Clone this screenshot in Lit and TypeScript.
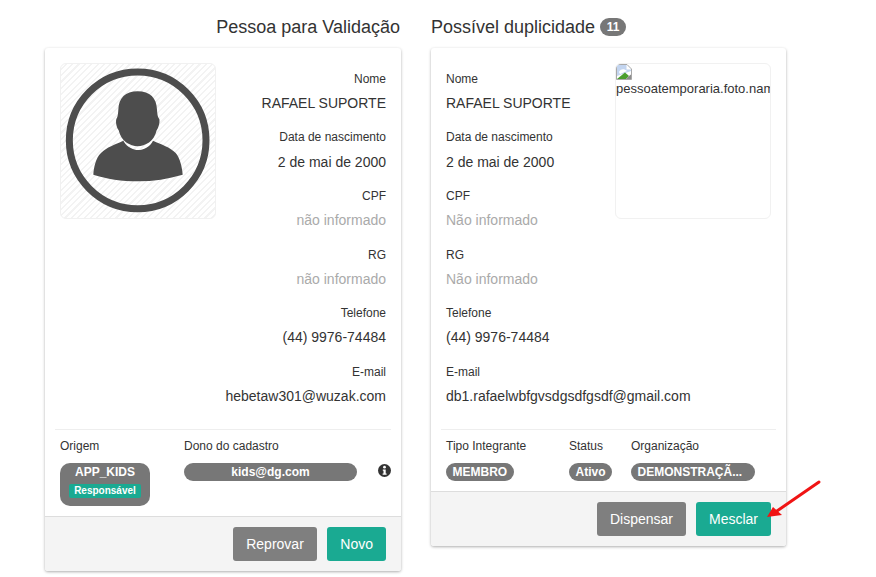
import { LitElement, html, css, nothing } from 'lit';
import { customElement } from 'lit/decorators.js';

interface Field {
    label: string;
    value: string;
    muted?: boolean;
}

const leftFields: Field[] = [
    { label: 'Nome', value: 'RAFAEL SUPORTE' },
    { label: 'Data de nascimento', value: '2 de mai de 2000' },
    { label: 'CPF', value: 'não informado', muted: true },
    { label: 'RG', value: 'não informado', muted: true },
    { label: 'Telefone', value: '(44) 9976-74484' },
    { label: 'E-mail', value: 'hebetaw301@wuzak.com' },
];

const rightFields: Field[] = [
    { label: 'Nome', value: 'RAFAEL SUPORTE' },
    { label: 'Data de nascimento', value: '2 de mai de 2000' },
    { label: 'CPF', value: 'Não informado', muted: true },
    { label: 'RG', value: 'Não informado', muted: true },
    { label: 'Telefone', value: '(44) 9976-74484' },
    { label: 'E-mail', value: 'db1.rafaelwbfgvsdgsdfgsdf@gmail.com' },
];

@customElement('app-root')
export class AppRoot extends LitElement {
    static styles = css`
        :host {
            display: block;
            position: relative;
            width: 876px;
            height: 577px;
            overflow: hidden;
            background: #fff;
            color: #333;
            font-family: 'Liberation Sans', Arial, sans-serif;
        }
        .topbar {
            height: 0;
            box-shadow: 0 0 5px rgba(0, 0, 0, 0.25);
        }
        .columns {
            display: flex;
            align-items: flex-start;
            gap: 30px;
            padding-left: 45px;
        }
        .col-left {
            width: 356px;
        }
        .col-right {
            width: 355px;
        }
        h2 {
            display: flex;
            align-items: center;
            gap: 5px;
            height: 20px;
            margin: 17px 0 11px;
            font-size: 18px;
            font-weight: 400;
            line-height: 20px;
        }
        .col-left h2 {
            justify-content: flex-end;
            padding-right: 1px;
        }
        .count {
            width: 26px;
            height: 18px;
            border-radius: 9px;
            background: #777;
            color: #fff;
            font-size: 12px;
            font-weight: 700;
            line-height: 18px;
            text-align: center;
        }
        .card {
            border-radius: 3px;
            background: #fff;
            box-shadow: 0 1px 3px rgba(0, 0, 0, 0.32);
        }
        .body {
            display: flex;
            justify-content: space-between;
            padding: 15px 15px 7.6px;
        }
        .photo {
            flex: none;
            box-sizing: border-box;
            width: 156px;
            height: 156px;
            border: 1px solid #f1f1f1;
            border-radius: 6px;
            overflow: hidden;
        }
        .photo.striped {
            background: repeating-linear-gradient(135deg, #fff 0 3px, #f3f3f3 3px 4.5px);
        }
        .photo svg {
            display: block;
        }
        .broken {
            font-size: 13px;
            line-height: 17px;
            white-space: nowrap;
        }
        .broken svg {
            width: 16px;
            height: 16px;
        }
        .fields {
            padding-top: 6.8px;
        }
        .col-left .fields {
            text-align: right;
        }
        .col-right .fields {
            flex: 1;
            min-width: 0;
            white-space: nowrap;
        }
        .field {
            margin-bottom: 14.4px;
        }
        .field label {
            display: block;
            margin-bottom: 5.2px;
            font-size: 12px;
            line-height: 18px;
        }
        .field div {
            font-size: 14px;
            line-height: 21px;
        }
        .field div.muted {
            color: #aaa;
        }
        .divider {
            margin: 0 10px;
            border-top: 1px solid #eee;
        }
        .meta {
            position: relative;
            display: grid;
            padding: 7px 15px 10px;
        }
        .col-left .meta {
            grid-template-columns: 124px 173px;
        }
        .col-right .meta {
            grid-template-columns: 123px 62px 124px;
        }
        .meta label {
            display: block;
            margin-bottom: 8px;
            font-size: 12px;
            line-height: 18px;
        }
        .pill {
            box-sizing: border-box;
            display: inline-block;
            min-height: 18px;
            padding: 0 6.5px;
            border-radius: 9px;
            background: #777;
            color: #fff;
            font-size: 12px;
            font-weight: 700;
            line-height: 18px;
            text-align: center;
            vertical-align: top;
        }
        .pill.origin {
            width: 90px;
            height: 43px;
            padding: 0 9px;
            border-radius: 10px;
        }
        .pill.owner {
            width: 173px;
        }
        .pill.org {
            width: 124px;
            white-space: nowrap;
            text-align: left;
        }
        .tag {
            display: block;
            height: 14px;
            margin-top: 3px;
            border-radius: 2px;
            background: #1aaa92;
            font-size: 10px;
            line-height: 14px;
        }
        .info {
            position: absolute;
            top: 34px;
            right: 10px;
            width: 13px;
            height: 13px;
        }
        .footer {
            display: flex;
            justify-content: flex-end;
            gap: 10px;
            padding: 10px 15px 10px;
            border-top: 1px solid #ddd;
            border-radius: 0 0 3px 3px;
            background: #f4f4f4;
        }
        button {
            height: 34px;
            padding: 0 13px;
            border: none;
            border-radius: 3px;
            color: #fff;
            font: 14px 'Liberation Sans', Arial, sans-serif;
        }
        .gray {
            background: #7f7f7f;
        }
        .wide {
            padding: 0 13.5px;
        }
        .teal {
            background: #1aaa92;
        }
        .arrow {
            position: absolute;
            left: 760px;
            top: 476px;
            width: 66px;
            height: 48px;
        }
    `;

    private renderField(f: Field) {
        return html`
            <div class="field">
                <label>${f.label}</label>
                <div class=${f.muted ? 'muted' : nothing}>${f.value}</div>
            </div>
        `;
    }

    private renderAvatar() {
        return html`
            <svg width="154" height="154" viewBox="18 13 462 462">
                <circle cx="248" cy="242" r="205" fill="none" stroke="#4d4d4d" stroke-width="21"></circle>
                <path fill="#4d4d4d" d="M248 95C285 95 305 115 306 150C307 165 308 172 313 178C315 190 310 205 305 212C298 245 270 260 248 260C226 260 198 245 191 212C186 205 181 190 184 178C188 172 189 165 190 150C191 115 211 95 248 95Z"></path>
                <path fill="#4d4d4d" d="M205 243C215 262 235 271 250 271C265 271 285 262 294 243C320 255 345 262 362 280C375 295 382 325 383 345C340 358 295 365 250 365C200 365 155 358 115 345C116 325 122 295 138 280C155 262 180 255 205 243Z"></path>
            </svg>
        `;
    }

    private renderBrokenImage() {
        return html`
            <div class="broken">
                <svg viewBox="0 0 16 16">
                    <path fill="#fff" stroke="#a9a9a9" d="M.5.5H11L15.5 5V15.5H.5Z"></path>
                    <path fill="#c3d5f0" d="M1 1H10.5V5.5H15V7L1 12Z"></path>
                    <path fill="#fff" d="M3 8C4 5 8 4 11 7L4 10Z"></path>
                    <path fill="#4a9e2e" d="M1 15L9 8.5L13 12L10 15Z"></path>
                    <path fill="#8c8c8c" d="M13 12L15 10.5V15H10Z"></path>
                </svg>
                <div>pessoatemporaria.foto.name</div>
            </div>
        `;
    }

    render() {
        return html`
            <div class="topbar"></div>
            <div class="columns">
                <section class="col-left">
                    <h2>Pessoa para Validação</h2>
                    <div class="card">
                        <div class="body">
                            <div class="photo striped">${this.renderAvatar()}</div>
                            <div class="fields">${leftFields.map((f) => this.renderField(f))}</div>
                        </div>
                        <div class="divider"></div>
                        <div class="meta">
                            <div>
                                <label>Origem</label>
                                <span class="pill origin">APP_KIDS<span class="tag">Responsável</span></span>
                            </div>
                            <div>
                                <label>Dono do cadastro</label>
                                <span class="pill owner">kids@dg.com</span>
                            </div>
                            <svg class="info" viewBox="0 0 13 13">
                                <circle cx="6.5" cy="6.5" r="6.5" fill="#333"></circle>
                                <circle cx="6.5" cy="3.2" r="1.4" fill="#fff"></circle>
                                <path fill="#fff" d="M4.8 5.4H7.7V9.4H8.6V10.7H4.6V9.4H5.5V6.7H4.8Z"></path>
                            </svg>
                        </div>
                        <div class="footer">
                            <button class="gray wide">Reprovar</button>
                            <button class="teal">Novo</button>
                        </div>
                    </div>
                </section>
                <section class="col-right">
                    <h2>Possível duplicidade <span class="count">11</span></h2>
                    <div class="card">
                        <div class="body">
                            <div class="fields">${rightFields.map((f) => this.renderField(f))}</div>
                            <div class="photo">${this.renderBrokenImage()}</div>
                        </div>
                        <div class="divider"></div>
                        <div class="meta">
                            <div>
                                <label>Tipo Integrante</label>
                                <span class="pill">MEMBRO</span>
                            </div>
                            <div>
                                <label>Status</label>
                                <span class="pill">Ativo</span>
                            </div>
                            <div>
                                <label>Organização</label>
                                <span class="pill org">DEMONSTRAÇÃ...</span>
                            </div>
                        </div>
                        <div class="footer">
                            <button class="gray">Dispensar</button>
                            <button class="teal">Mesclar</button>
                        </div>
                    </div>
                </section>
            </div>
            <svg class="arrow" viewBox="0 0 66 48">
                <path fill="none" stroke="#f01414" stroke-width="3" stroke-linecap="round" d="M59 6L17 35"></path>
                <path fill="#f01414" d="M7 41L13 31L22 39Z"></path>
            </svg>
        `;
    }
}
